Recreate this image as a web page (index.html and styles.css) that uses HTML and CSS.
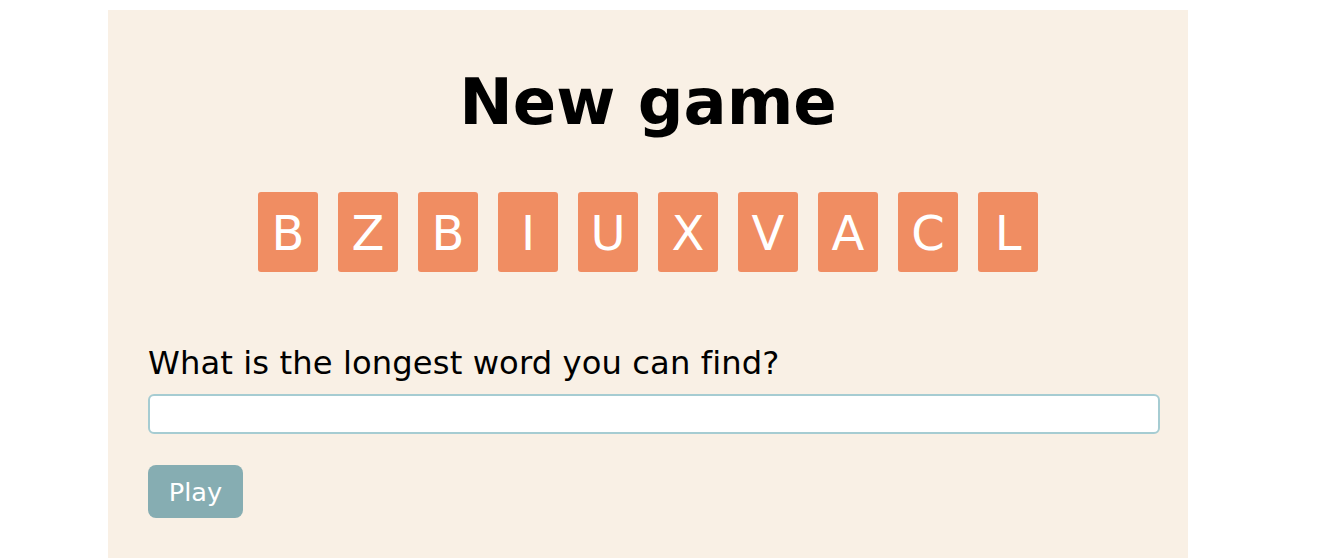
FILE: index.html
```html
<!DOCTYPE html>
<html>
<head>
<meta charset="utf-8">
<link rel="stylesheet" href="styles.css">
</head>
<body>
<main class="game">
  <h1 class="title">New game</h1>
  <div class="tiles">
    <span class="tile">B</span>
    <span class="tile">Z</span>
    <span class="tile">B</span>
    <span class="tile">I</span>
    <span class="tile">U</span>
    <span class="tile">X</span>
    <span class="tile">V</span>
    <span class="tile">A</span>
    <span class="tile">C</span>
    <span class="tile">L</span>
  </div>
  <form class="form">
    <label class="label" for="word">What is the longest word you can find?</label>
    <input class="input" id="word" type="text">
    <button class="play" type="button">Play</button>
  </form>
</main>
</body>
</html>
```
FILE: styles.css
```css
html, body {
  margin: 0;
  padding: 0;
  background: #ffffff;
  font-family: "DejaVu Sans", Verdana, sans-serif;
}

body {
  padding: 10px 0 0 108px;
}

.game {
  box-sizing: border-box;
  width: 1080px;
  height: 548px;
  background: #f9f0e5;
  padding: 55px 40px 0 40px;
  display: flex;
  flex-direction: column;
}

.title {
  margin: 0;
  text-align: center;
  font-size: 64px;
  font-weight: bold;
  line-height: 75px;
  color: #000;
}

.tiles {
  margin-top: 52px;
  display: flex;
  justify-content: center;
  gap: 20px;
}

.tile {
  width: 60px;
  height: 80px;
  background: #f08d62;
  color: #fff;
  border-radius: 3px;
  font-size: 48px;
  display: flex;
  align-items: center;
  justify-content: center;
  padding-top: 2px;
  box-sizing: border-box;
}

.form {
  margin-top: 73px;
  display: flex;
  flex-direction: column;
  align-items: flex-start;
}

.label {
  font-size: 32.2px;
  letter-spacing: 0.1px;
  line-height: 37px;
  color: #000;
}

.input {
  margin-top: 12px;
  box-sizing: border-box;
  width: 1012px;
  height: 40px;
  border: 2px solid #a6ccd2;
  border-radius: 6px;
  background: #fff;
  padding: 4px;
  font-size: 24px;
  font-family: inherit;
  outline: none;
}

.play {
  margin-top: 31px;
  width: 95px;
  height: 53px;
  border: none;
  border-radius: 8px;
  background: #86adb2;
  color: #fff;
  font-family: inherit;
  font-size: 25.6px;
  padding: 0;
}
```
